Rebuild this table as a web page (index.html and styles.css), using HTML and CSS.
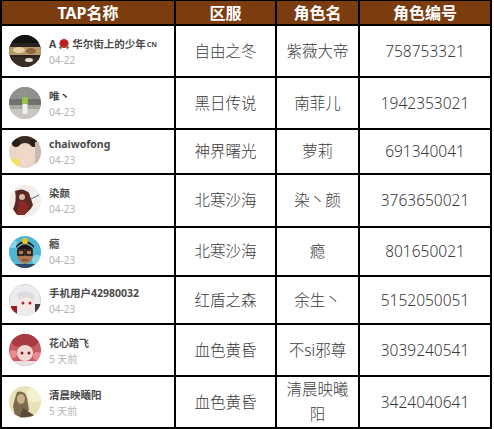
FILE: index.html
```html
<!DOCTYPE html>
<html lang="zh">
<head>
<meta charset="utf-8">
<link rel="stylesheet" href="styles.css">
</head>
<body>
<div class="sheet">
  <div class="hd">TAP名称</div>
  <div class="hd">区服</div>
  <div class="hd">角色名</div>
  <div class="hd">角色编号</div>

  <div class="tap">
    <svg class="av" viewBox="0 0 32 32"><defs><clipPath id="c1"><circle cx="16" cy="16" r="16"/></clipPath></defs><g clip-path="url(#c1)"><rect width="32" height="32" fill="#2a2420"/><rect y="12" width="32" height="8" fill="#b89a6a"/><ellipse cx="10" cy="15" rx="6" ry="3" fill="#e6d3a4"/><ellipse cx="22" cy="16" rx="5" ry="3" fill="#8a6a3e"/><rect y="22" width="32" height="10" fill="#3b2c25"/><ellipse cx="20" cy="25" rx="4" ry="2" fill="#e8e2dc"/><rect y="0" width="32" height="8" fill="#141210"/></g></svg>
    <div class="info"><div class="nm">A<svg class="rose" viewBox="0 0 12 12"><circle cx="6" cy="5.5" r="4.6" fill="#c8252a"/><path d="M3.3 4.5 Q6 2.3 8.7 4.5 M3.8 6.6 Q6 5 8.2 6.6" stroke="#8a1014" stroke-width="0.8" fill="none"/><path d="M0.5 9 L4 8 L3 11.5 Z" fill="#4a7a2a"/><path d="M11.5 9 L8 8 L9 11.5 Z" fill="#4a7a2a"/></svg>华尔街上的少年<span class="cn">CN</span></div><div class="dt">04-22</div></div>
  </div>
  <div class="c">自由之冬</div>
  <div class="c">紫薇大帝</div>
  <div class="c">758753321</div>

  <div class="tap">
    <svg class="av" viewBox="0 0 32 32"><defs><clipPath id="c2"><circle cx="16" cy="16" r="16"/></clipPath></defs><g clip-path="url(#c2)"><rect width="32" height="32" fill="#a8a8a2"/><rect width="32" height="12" fill="#8e918c"/><rect y="12" width="32" height="6" fill="#6f726c"/><rect y="22" width="32" height="10" fill="#c9c7c0"/><rect x="13" y="10" width="6" height="8" rx="2" fill="#9cc24a"/><rect x="13.5" y="17" width="5" height="10" fill="#eeeeea"/></g></svg>
    <div class="info"><div class="nm">唯丶</div><div class="dt">04-23</div></div>
  </div>
  <div class="c">黑日传说</div>
  <div class="c">南菲儿</div>
  <div class="c">1942353021</div>

  <div class="tap">
    <svg class="av" viewBox="0 0 32 32"><defs><clipPath id="c3"><circle cx="16" cy="16" r="16"/></clipPath></defs><g clip-path="url(#c3)"><rect width="32" height="32" fill="#e8d8cc"/><ellipse cx="16" cy="4" rx="16" ry="7" fill="#3a2a24"/><circle cx="7" cy="7" r="4" fill="#2a1e1a"/><circle cx="25" cy="7" r="4" fill="#2a1e1a"/><ellipse cx="16" cy="18" rx="9" ry="11" fill="#f0d8c8"/><circle cx="6" cy="27" r="5" fill="#f2e060"/><rect x="26" y="6" width="6" height="26" fill="#c9b9b0"/></g></svg>
    <div class="info"><div class="nm">chaiwofong</div><div class="dt">04-23</div></div>
  </div>
  <div class="c">神界曙光</div>
  <div class="c">萝莉</div>
  <div class="c">691340041</div>

  <div class="tap">
    <svg class="av" viewBox="0 0 32 32"><defs><clipPath id="c4"><circle cx="16" cy="16" r="16"/></clipPath></defs><g clip-path="url(#c4)"><rect width="32" height="32" fill="#f2eeec"/><path d="M6 6 Q14 2 20 8 L24 20 Q20 30 8 30 L4 24 Q8 16 6 6 Z" fill="#5a2a22"/><path d="M10 16 Q16 14 20 22 L16 30 L8 30 Z" fill="#8a2a26"/><circle cx="13" cy="12" r="3" fill="#d8b8a8"/><path d="M22 14 L30 10" stroke="#6a6a6a" stroke-width="1"/></g></svg>
    <div class="info"><div class="nm">染颜</div><div class="dt">04-23</div></div>
  </div>
  <div class="c">北寒沙海</div>
  <div class="c">染丶颜</div>
  <div class="c">3763650021</div>

  <div class="tap">
    <svg class="av" viewBox="0 0 32 32"><defs><clipPath id="c5"><circle cx="16" cy="16" r="16"/></clipPath></defs><g clip-path="url(#c5)"><rect width="32" height="32" fill="#4fb6d6"/><circle cx="4" cy="8" r="4" fill="#8ad4ea"/><circle cx="28" cy="24" r="5" fill="#8ad4ea"/><ellipse cx="16" cy="18" rx="8" ry="10" fill="#b07850"/><path d="M7 12 Q16 2 25 12 L25 10 Q16 0 7 10 Z" fill="#1a1410"/><path d="M8 13 Q16 4 24 13" fill="#1a1410"/><circle cx="16" cy="5" r="3" fill="#f0c020"/><rect x="9" y="14" width="6" height="5" fill="none" stroke="#111" stroke-width="1.5"/><rect x="17" y="14" width="6" height="5" fill="none" stroke="#111" stroke-width="1.5"/><path d="M13 24 L19 24" stroke="#5a3020" stroke-width="1"/><rect x="6" y="28" width="20" height="4" fill="#2a4a6a"/></g></svg>
    <div class="info"><div class="nm">瘾</div><div class="dt">04-23</div></div>
  </div>
  <div class="c">北寒沙海</div>
  <div class="c">瘾</div>
  <div class="c">801650021</div>

  <div class="tap">
    <svg class="av" viewBox="0 0 32 32"><defs><clipPath id="c6"><circle cx="16" cy="16" r="16"/></clipPath></defs><g clip-path="url(#c6)"><rect width="32" height="32" fill="#d6d2d4"/><path d="M2 6 Q16 -4 30 6 L32 32 L0 32 Z" fill="#ecebee"/><ellipse cx="17" cy="18" rx="8" ry="9" fill="#f6e8e4"/><path d="M8 10 Q17 4 26 12 L24 16 Q17 10 10 16 Z" fill="#dcdade"/><circle cx="14" cy="19" r="1.5" fill="#b02030"/><circle cx="21" cy="19" r="1.5" fill="#b02030"/><rect x="2" y="22" width="6" height="10" fill="#a01a22"/><rect x="26" y="20" width="6" height="12" fill="#4a3a3e"/></g></svg>
    <div class="info"><div class="nm">手机用户42980032</div><div class="dt">04-23</div></div>
  </div>
  <div class="c">红盾之森</div>
  <div class="c">余生丶</div>
  <div class="c">5152050051</div>

  <div class="tap">
    <svg class="av" viewBox="0 0 32 32"><defs><clipPath id="c7"><circle cx="16" cy="16" r="16"/></clipPath></defs><g clip-path="url(#c7)"><rect width="32" height="32" fill="#c85a62"/><ellipse cx="16" cy="6" rx="14" ry="8" fill="#a83a44"/><ellipse cx="16" cy="19" rx="8" ry="8" fill="#f4d8d4"/><circle cx="13" cy="19" r="1.5" fill="#7a2030"/><circle cx="20" cy="19" r="1.5" fill="#7a2030"/><circle cx="4" cy="20" r="4" fill="#e88a8e"/><circle cx="28" cy="22" r="4" fill="#e88a8e"/><rect y="27" width="32" height="5" fill="#eae0e0"/></g></svg>
    <div class="info"><div class="nm nm2">花心踏飞</div><div class="dt">5 天前</div></div>
  </div>
  <div class="c">血色黄昏</div>
  <div class="c">不si邪尊</div>
  <div class="c">3039240541</div>

  <div class="tap">
    <svg class="av" viewBox="0 0 32 32"><defs><clipPath id="c8"><circle cx="16" cy="16" r="16"/></clipPath></defs><g clip-path="url(#c8)"><rect width="32" height="32" fill="#e8e2b8"/><circle cx="26" cy="8" r="8" fill="#f4f0d0"/><path d="M8 6 Q16 4 18 12 L20 24 Q14 32 6 30 L4 20 Q6 12 8 6 Z" fill="#7a6a4e"/><ellipse cx="12" cy="13" rx="4" ry="5" fill="#c8b08a"/><path d="M14 22 L26 30 L10 32 Z" fill="#5a4a36"/></g></svg>
    <div class="info"><div class="nm">清晨映曦阳</div><div class="dt">5 天前</div></div>
  </div>
  <div class="c">血色黄昏</div>
  <div class="c wrap">清晨映曦阳</div>
  <div class="c">3424040641</div>
</div>
</body>
</html>
```

FILE: styles.css
```css
html, body {
  margin: 0;
  padding: 0;
  background: #ffffff;
}

.sheet {
  width: 488px;
  padding: 1px 2px 2px 2px;
  background: #000000;
  display: grid;
  grid-template-columns: 172px 99px 81px 130px;
  grid-template-rows: 23px 50px 50px 43px 51px 47px 46px 50px 50px;
  gap: 2px;
  font-family: "Noto Sans", "Noto Sans CJK SC", sans-serif;
}

.hd {
  background: #7b3c10;
  color: #ffffff;
  font-weight: bold;
  font-size: 16px;
  display: flex;
  align-items: center;
  justify-content: center;
  line-height: 1;
}

.c {
  background: #ffffff;
  color: #3a3a3a;
  font-size: 15.5px;
  font-weight: 300;
  line-height: 25px;
  display: flex;
  align-items: center;
  justify-content: center;
  text-align: center;
  padding: 0 4px;
}

.tap {
  background: #ffffff;
  display: flex;
  align-items: center;
  padding-left: 7px;
  gap: 8px;
}

.av {
  width: 32px;
  height: 32px;
  flex: none;
  filter: blur(0.4px);
}

.info {
  display: flex;
  flex-direction: column;
  gap: 3px;
  padding-top: 1px;
}

.nm {
  font-size: 10.5px;
  font-weight: bold;
  color: #4a4a4a;
  line-height: 13px;
  display: flex;
  align-items: center;
  white-space: nowrap;
}

.nm2 {
  font-size: 10px;
}

.rose {
  width: 12px;
  height: 12px;
  margin: 0 2px 0 2px;
}

.cn {
  font-size: 7px;
  margin-left: 1px;
}

.dt {
  font-size: 10px;
  color: #b4b4b4;
  line-height: 12px;
}
```
